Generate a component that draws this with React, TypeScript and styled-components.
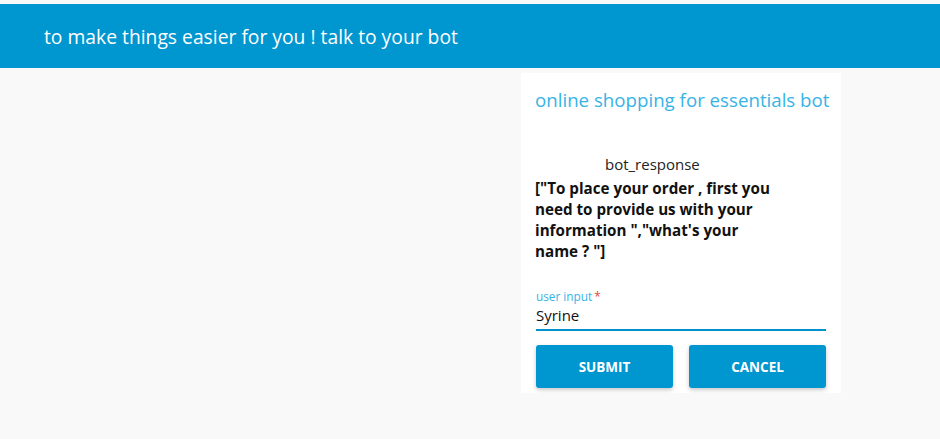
import React, { useState } from "react"
import styled, { createGlobalStyle } from "styled-components"

const GlobalStyle = createGlobalStyle`
  html, body {
    margin: 0;
    padding: 0;
    background: #f9f9f9;
    font-family: "Open Sans", "Noto Sans", sans-serif;
  }
`

export default function App() {
  const [value, setValue] = useState("Syrine")
  return (
    <>
      <GlobalStyle />
      <Page>
        <Header>
          <HeaderTitle>to make things easier for you ! talk to your bot</HeaderTitle>
        </Header>
        <Main>
          <Card>
            <CardTitle>online shopping for essentials bot</CardTitle>
            <ResponseLabel>bot_response</ResponseLabel>
            <ResponseText>
              ["To place your order , first you need to provide us with your
              information ","what's your name ? "]
            </ResponseText>
            <Field>
              <FieldLabel>
                user input<Required>*</Required>
              </FieldLabel>
              <FieldInput
                value={value}
                onChange={(e) => setValue(e.target.value)}
                autoFocus
              />
            </Field>
            <Actions>
              <ActionBtn>Submit</ActionBtn>
              <ActionBtn>Cancel</ActionBtn>
            </Actions>
          </Card>
        </Main>
      </Page>
    </>
  )
}

const Page = styled.div`
  min-height: 439px;
  padding-top: 4px;
  box-sizing: border-box;
`

const Header = styled.header`
  background: #0096cf;
  height: 64px;
  display: flex;
  align-items: center;
  padding-left: 44px;
`

const HeaderTitle = styled.h1`
  margin: 0;
  font-size: 19.3px;
  font-weight: 400;
  color: #ffffff;
`

const Main = styled.main`
  display: grid;
  grid-template-columns: 521px 320px;
  padding-top: 5px;
`

const Card = styled.section`
  grid-column: 2;
  background: #ffffff;
  padding: 14px 15px 5px 14px;
  height: 320px;
  box-sizing: border-box;
`

const CardTitle = styled.h2`
  margin: 0;
  font-size: 18.7px;
  line-height: 26px;
  font-weight: 400;
  color: #38b3e6;
  white-space: nowrap;
`

const ResponseLabel = styled.div`
  margin-top: 41px;
  padding-left: 70px;
  font-size: 15px;
  color: #222;
  line-height: 20px;
`

const ResponseText = styled.p`
  margin: 4px 0 0;
  width: 245px;
  font-size: 15.2px;
  font-weight: 700;
  line-height: 21px;
  color: #111;
`

const Field = styled.label`
  display: flex;
  flex-direction: column;
  margin-top: 27px;
  padding-left: 1px;
`

const FieldLabel = styled.span`
  font-size: 11.8px;
  color: #38b3e6;
  line-height: 14px;
`

const Required = styled.span`
  color: #e0443a;
  margin-left: 2px;
`

const FieldInput = styled.input`
  border: none;
  border-bottom: 2px solid #0092cc;
  outline: none;
  background: transparent;
  font-family: inherit;
  font-size: 15px;
  color: #111;
  padding: 2px 0 4px;
  caret-color: #000;
`

const Actions = styled.div`
  display: grid;
  grid-template-columns: 1fr 1fr;
  gap: 16px;
  margin-top: 14px;
  padding-left: 1px;
`

const ActionBtn = styled.button`
  height: 43px;
  border: none;
  border-radius: 3px;
  background: #0096cf;
  color: #ffffff;
  font-family: inherit;
  font-size: 13.5px;
  font-weight: 700;
  text-transform: uppercase;
  box-shadow: 0 2px 4px rgba(0, 0, 0, 0.22);
  cursor: pointer;
`
